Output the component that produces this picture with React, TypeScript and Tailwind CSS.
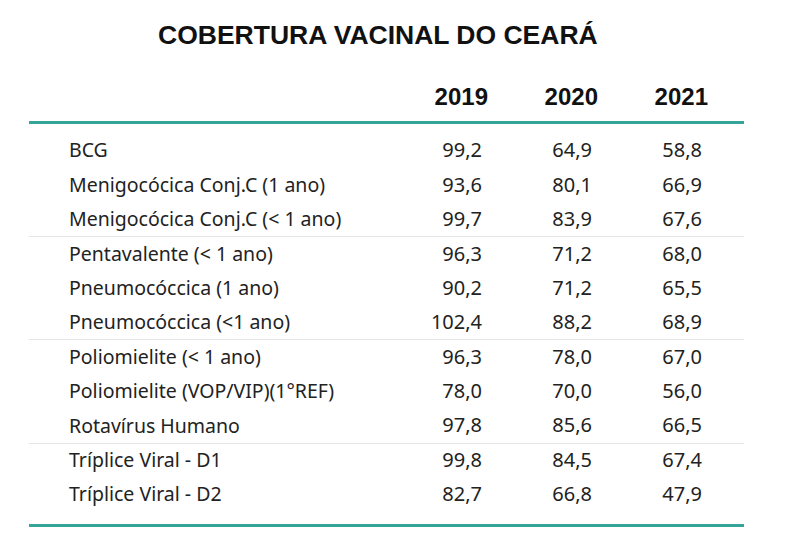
const rows = [
  { name: 'BCG', v: ['99,2', '64,9', '58,8'] },
  { name: 'Menigocócica Conj.C (1 ano)', v: ['93,6', '80,1', '66,9'] },
  { name: 'Menigocócica Conj.C (< 1 ano)', v: ['99,7', '83,9', '67,6'] },
  { name: 'Pentavalente (< 1 ano)', v: ['96,3', '71,2', '68,0'], sep: true },
  { name: 'Pneumocóccica (1 ano)', v: ['90,2', '71,2', '65,5'] },
  { name: 'Pneumocóccica (<1 ano)', v: ['102,4', '88,2', '68,9'] },
  { name: 'Poliomielite (< 1 ano)', v: ['96,3', '78,0', '67,0'], sep: true },
  { name: 'Poliomielite (VOP/VIP)(1°REF)', v: ['78,0', '70,0', '56,0'] },
  { name: 'Rotavírus Humano', v: ['97,8', '85,6', '66,5'] },
  { name: 'Tríplice Viral - D1', v: ['99,8', '84,5', '67,4'], sep: true },
  { name: 'Tríplice Viral - D2', v: ['82,7', '66,8', '47,9'] },
];

export default function App() {
  return (
    <div className="w-[794px] h-[539px] bg-white flex flex-col overflow-hidden">
      <h1 className="mt-[22px] pl-[158px] h-[26px] text-[26.5px] leading-none font-bold text-[#111] font-['Liberation_Sans',sans-serif]">
        COBERTURA VACINAL DO CEARÁ
      </h1>

      <div className="mx-[29px] w-[715px] mt-[37px] flex flex-col">
        <div className="grid grid-cols-[1fr_110px_110px_110px] pr-[36px] h-[24px] text-[24px] leading-none font-bold text-[#111] font-['Liberation_Sans',sans-serif]">
          <div />
          <div className="text-right">2019</div>
          <div className="text-right">2020</div>
          <div className="text-right">2021</div>
        </div>

        <div className="mt-[12px] h-[3px] bg-[#35a49b]" />

        <div className="mt-[9px] flex flex-col font-['Noto_Sans',sans-serif] text-[#222]">
          {rows.map((r) => (
            <div
              key={r.name}
              className={`grid grid-cols-[1fr_110px_110px_110px] pl-[40px] pr-[42px] h-[34.4px] items-center ${r.sep ? 'border-t border-[#e6e6e6]' : ''}`}
            >
              <div className="text-[19.5px] leading-none">{r.name}</div>
              {r.v.map((n, i) => (
                <div key={i} className="text-right text-[20px] leading-none">{n}</div>
              ))}
            </div>
          ))}
        </div>

        <div className="mt-[13px] h-[3px] bg-[#35a49b]" />
      </div>
    </div>
  );
}
